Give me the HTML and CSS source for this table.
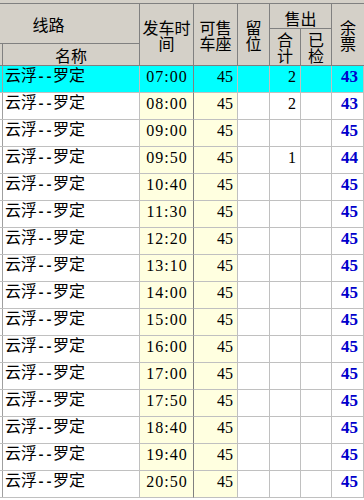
FILE: index.html
```html
<!DOCTYPE html>
<html lang="zh-CN">
<head>
<meta charset="utf-8">
<title>班次余票</title>
<link rel="stylesheet" href="styles.css">
</head>
<body>
<div class="head-wrap">
  <div class="cols head">
    <div class="h h-route">线路</div>
    <div class="h h-time">发车时<br>间</div>
    <div class="h h-seat">可售<br>车座</div>
    <div class="h h-keep">留<br>位</div>
    <div class="h h-sold">售出</div>
    <div class="h h-rest last">余<br>票</div>
    <div class="h h-total">合<br>计</div>
    <div class="h h-check">已<br>检</div>
    <div class="h h-name">名称</div>
  </div>
</div>
<div class="rows">
  <div class="cols row sel"><div class="c name">云浮<span class="dash">--</span>罗定</div><div class="c time">07:00</div><div class="c seat">45</div><div class="c"></div><div class="c num">2</div><div class="c"></div><div class="c rest last">43</div></div>
  <div class="cols row"><div class="c name">云浮<span class="dash">--</span>罗定</div><div class="c time">08:00</div><div class="c seat">45</div><div class="c"></div><div class="c num">2</div><div class="c"></div><div class="c rest last">43</div></div>
  <div class="cols row"><div class="c name">云浮<span class="dash">--</span>罗定</div><div class="c time">09:00</div><div class="c seat">45</div><div class="c"></div><div class="c num"></div><div class="c"></div><div class="c rest last">45</div></div>
  <div class="cols row"><div class="c name">云浮<span class="dash">--</span>罗定</div><div class="c time">09:50</div><div class="c seat">45</div><div class="c"></div><div class="c num">1</div><div class="c"></div><div class="c rest last">44</div></div>
  <div class="cols row"><div class="c name">云浮<span class="dash">--</span>罗定</div><div class="c time">10:40</div><div class="c seat">45</div><div class="c"></div><div class="c num"></div><div class="c"></div><div class="c rest last">45</div></div>
  <div class="cols row"><div class="c name">云浮<span class="dash">--</span>罗定</div><div class="c time">11:30</div><div class="c seat">45</div><div class="c"></div><div class="c num"></div><div class="c"></div><div class="c rest last">45</div></div>
  <div class="cols row"><div class="c name">云浮<span class="dash">--</span>罗定</div><div class="c time">12:20</div><div class="c seat">45</div><div class="c"></div><div class="c num"></div><div class="c"></div><div class="c rest last">45</div></div>
  <div class="cols row"><div class="c name">云浮<span class="dash">--</span>罗定</div><div class="c time">13:10</div><div class="c seat">45</div><div class="c"></div><div class="c num"></div><div class="c"></div><div class="c rest last">45</div></div>
  <div class="cols row"><div class="c name">云浮<span class="dash">--</span>罗定</div><div class="c time">14:00</div><div class="c seat">45</div><div class="c"></div><div class="c num"></div><div class="c"></div><div class="c rest last">45</div></div>
  <div class="cols row"><div class="c name">云浮<span class="dash">--</span>罗定</div><div class="c time">15:00</div><div class="c seat">45</div><div class="c"></div><div class="c num"></div><div class="c"></div><div class="c rest last">45</div></div>
  <div class="cols row"><div class="c name">云浮<span class="dash">--</span>罗定</div><div class="c time">16:00</div><div class="c seat">45</div><div class="c"></div><div class="c num"></div><div class="c"></div><div class="c rest last">45</div></div>
  <div class="cols row"><div class="c name">云浮<span class="dash">--</span>罗定</div><div class="c time">17:00</div><div class="c seat">45</div><div class="c"></div><div class="c num"></div><div class="c"></div><div class="c rest last">45</div></div>
  <div class="cols row"><div class="c name">云浮<span class="dash">--</span>罗定</div><div class="c time">17:50</div><div class="c seat">45</div><div class="c"></div><div class="c num"></div><div class="c"></div><div class="c rest last">45</div></div>
  <div class="cols row"><div class="c name">云浮<span class="dash">--</span>罗定</div><div class="c time">18:40</div><div class="c seat">45</div><div class="c"></div><div class="c num"></div><div class="c"></div><div class="c rest last">45</div></div>
  <div class="cols row"><div class="c name">云浮<span class="dash">--</span>罗定</div><div class="c time">19:40</div><div class="c seat">45</div><div class="c"></div><div class="c num"></div><div class="c"></div><div class="c rest last">45</div></div>
  <div class="cols row"><div class="c name">云浮<span class="dash">--</span>罗定</div><div class="c time">20:50</div><div class="c seat">45</div><div class="c"></div><div class="c num"></div><div class="c"></div><div class="c rest last">45</div></div>
</div>
</body>
</html>
```
FILE: styles.css
```css
* { box-sizing: border-box; margin: 0; padding: 0; }
html, body { width: 364px; height: 500px; overflow: hidden; }
body {
  background: #ffffff;
  font-family: "Noto Sans CJK SC", "Liberation Sans", sans-serif;
  font-size: 16px;
  color: #000;
}
.cols {
  display: grid;
  grid-template-columns: 140px 54px 44px 32px 31px 31px 32px;
}
.head-wrap { background: #d4d0c8; padding-top: 3px; }
.head {
  border-top: 1px solid #808080;
  grid-template-rows: 25px 15px 22px;
}
.h {
  border-right: 1px solid #808080;
  border-bottom: 1px solid #808080;
  display: flex;
  align-items: center;
  justify-content: center;
  text-align: center;
  line-height: 16px;
}
.h-route { grid-column: 1; grid-row: 1 / 3; padding-right: 42px; }
.h-name {
  grid-column: 1; grid-row: 3;
  background-image: linear-gradient(90deg, transparent 2px, #808080 2px, #808080 3px, transparent 3px);
  padding-left: 3px;
}
.h-time { grid-column: 2; grid-row: 1 / 4; }
.h-seat { grid-column: 3; grid-row: 1 / 4; }
.h-keep { grid-column: 4; grid-row: 1 / 4; }
.h-sold { grid-column: 5 / 7; grid-row: 1; padding-top: 3px; }
.h-total { grid-column: 5; grid-row: 2 / 4; }
.h-check { grid-column: 6; grid-row: 2 / 4; }
.h-rest { grid-column: 7; grid-row: 1 / 4; }
.last { border-right: 0; }

.row { height: 27px; }
.c {
  border-right: 1px solid #c0c0c0;
  border-bottom: 1px solid #c0c0c0;
  background-color: #ffffff;
  line-height: 17px;
  white-space: nowrap;
}
.name {
  padding-left: 5px;
  background-image: linear-gradient(90deg, transparent 2px, #a0a0a0 2px, #a0a0a0 3px, transparent 3px);
}
.dash {
  font-family: "Liberation Mono", monospace;
  font-size: 13.33px;
  font-weight: bold;
}
.time {
  background-color: #ffffe0;
  border-right-color: #808080;
  text-align: center;
  font-family: "Liberation Serif", serif;
  letter-spacing: 1px;
  padding-left: 1px;
  padding-top: 2px;
}
.seat {
  background-color: #ffffe0;
  text-align: right;
  padding-right: 4px;
  font-family: "Liberation Serif", serif;
  padding-top: 2px;
}
.num {
  text-align: right;
  padding-right: 4px;
  font-family: "Liberation Serif", serif;
  padding-top: 2px;
}
.rest {
  text-align: right;
  padding-right: 5px;
  font-family: "Liberation Serif", serif;
  font-weight: bold;
  font-size: 17px;
  color: #0000cc;
  padding-top: 2px;
}
.sel .c { background-color: #00ffff; }
```
